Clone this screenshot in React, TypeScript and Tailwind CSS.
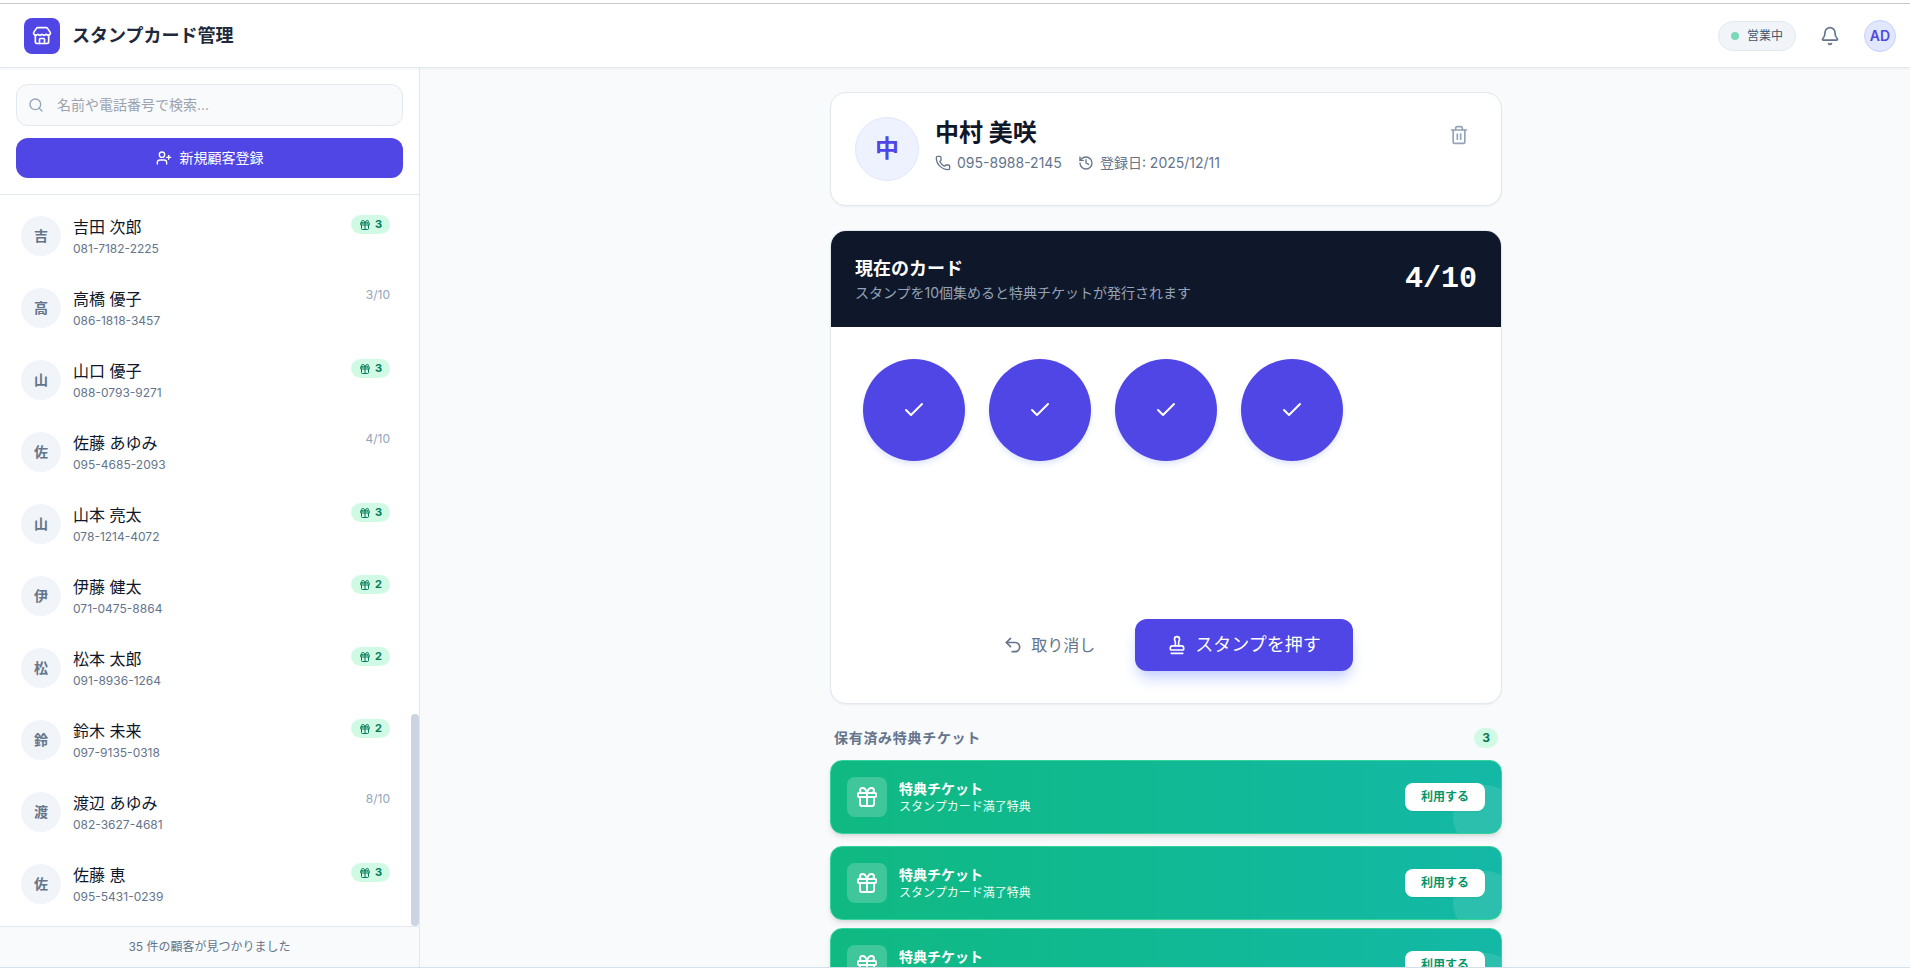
import {
  Bell,
  Check,
  Gift,
  History,
  Phone,
  Search,
  Stamp,
  Store,
  Trash2,
  Undo2,
  UserPlus,
} from "lucide-react";

type Customer = {
  name: string;
  phone: string;
  tickets?: number;
  stamps?: number;
};

const customers: Customer[] = [
  { name: "吉田 次郎", phone: "081-7182-2225", tickets: 3 },
  { name: "高橋 優子", phone: "086-1818-3457", stamps: 3 },
  { name: "山口 優子", phone: "088-0793-9271", tickets: 3 },
  { name: "佐藤 あゆみ", phone: "095-4685-2093", stamps: 4 },
  { name: "山本 亮太", phone: "078-1214-4072", tickets: 3 },
  { name: "伊藤 健太", phone: "071-0475-8864", tickets: 2 },
  { name: "松本 太郎", phone: "091-8936-1264", tickets: 2 },
  { name: "鈴木 未来", phone: "097-9135-0318", tickets: 2 },
  { name: "渡辺 あゆみ", phone: "082-3627-4681", stamps: 8 },
  { name: "佐藤 恵", phone: "095-5431-0239", tickets: 3 },
];

const CARD_SIZE = 10;
const stampCount = 4;

function Header() {
  return (
    <header className="z-10 flex h-16 shrink-0 items-center justify-between border-b border-[#e2e8f0] bg-white pr-[14px] pl-6 shadow-xs">
      <div className="flex items-center gap-3">
        <div className="flex size-9 items-center justify-center rounded-lg bg-[#4f46e5] text-white">
          <Store size={20} />
        </div>
        <h1 className="text-lg font-bold text-[#1e293b]">スタンプカード管理</h1>
      </div>
      <div className="flex items-center gap-4">
        <div className="flex items-center gap-2 rounded-full border border-[#e2e8f0] bg-[#f1f5f9] px-3 py-1.5 text-xs text-[#475569]">
          <span className="size-2 rounded-full bg-[#7dd8b8]" />
          営業中
        </div>
        <button type="button" aria-label="通知" className="p-2 text-[#64748b]">
          <Bell size={20} />
        </button>
        <div className="flex size-8 items-center justify-center rounded-full border border-[#c7d2fe] bg-[#e0e7ff] text-sm font-semibold text-[#4f46e5]">
          AD
        </div>
      </div>
    </header>
  );
}

function CustomerRow({ customer }: { customer: Customer }) {
  return (
    <li>
      <button
        type="button"
        className="flex w-full items-start gap-3 rounded-xl border border-transparent p-3 text-left"
      >
        <span className="flex size-10 shrink-0 items-center justify-center self-center rounded-full bg-[#f1f5f9] text-sm font-bold text-[#64748b]">
          {customer.name.charAt(0)}
        </span>
        <span className="flex min-w-0 flex-1 flex-col gap-0.5">
          <span className="truncate text-base text-[#0f172a]">{customer.name}</span>
          <span className="text-xs text-[#64748b]">{customer.phone}</span>
        </span>
        {customer.tickets ? (
          <span className="flex items-center gap-1 rounded-full bg-[#d1fae5] px-2 py-0.5 text-[11px] leading-[15px] font-bold text-[#047857]">
            <Gift size={12} />
            {customer.tickets}
          </span>
        ) : (
          <span className="text-xs text-[#94a3b8]">
            {customer.stamps}/{CARD_SIZE}
          </span>
        )}
      </button>
    </li>
  );
}

function Sidebar() {
  return (
    <aside className="flex w-[420px] shrink-0 flex-col border-r border-[#e2e8f0] bg-white">
      <div className="flex flex-col gap-3 border-b border-[#e2e8f0] p-4">
        <div className="relative">
          <Search size={16} className="absolute top-1/2 left-3 -translate-y-1/2 text-[#94a3b8]" />
          <input
            type="text"
            aria-label="顧客検索"
            placeholder="名前や電話番号で検索..."
            className="block w-full rounded-xl border border-[#e2e8f0] bg-[#f8fafc] py-2.5 pr-4 pl-10 text-sm placeholder:text-[#9ca3af]"
          />
        </div>
        <button
          type="button"
          className="flex w-full items-center justify-center gap-2 rounded-xl bg-[#4f46e5] py-2.5 text-sm text-white"
        >
          <UserPlus size={16} />
          新規顧客登録
        </button>
      </div>
      <div className="relative flex min-h-0 flex-1 flex-col justify-end overflow-hidden pr-2">
        <ul className="flex flex-col gap-1 px-2 pb-2">
          {customers.map((c) => (
            <CustomerRow key={c.phone} customer={c} />
          ))}
        </ul>
        <div className="absolute right-0 bottom-0 h-[29%] w-2 rounded-full bg-[#cbd5e1]" />
      </div>
      <p className="border-t border-[#e2e8f0] bg-[#f8fafc] p-3 text-center text-xs text-[#64748b]">
        35 件の顧客が見つかりました
      </p>
    </aside>
  );
}

function ProfileCard() {
  return (
    <section className="flex items-start gap-4 rounded-2xl border border-[#e2e8f0] bg-white p-6 shadow-xs">
      <div className="flex size-16 shrink-0 items-center justify-center rounded-full border border-[#e0e7ff] bg-[#eef2ff] text-2xl font-bold text-[#4f46e5]">
        中
      </div>
      <div className="flex flex-1 flex-col gap-1">
        <h2 className="text-2xl font-bold text-[#0f172a]">中村 美咲</h2>
        <div className="flex items-center gap-4 text-sm text-[#64748b]">
          <span className="flex items-center gap-1.5">
            <Phone size={16} />
            095-8988-2145
          </span>
          <span className="flex items-center gap-1.5">
            <History size={16} />
            登録日: 2025/12/11
          </span>
        </div>
      </div>
      <button type="button" aria-label="顧客を削除" className="p-2 text-[#94a3b8]">
        <Trash2 size={20} />
      </button>
    </section>
  );
}

function StampCard() {
  return (
    <section className="overflow-hidden rounded-2xl border border-[#e2e8f0] bg-white shadow-xs">
      <div className="flex items-center justify-between bg-[#0f172a] p-6">
        <div>
          <h3 className="text-lg font-bold text-white">現在のカード</h3>
          <p className="text-sm text-[#94a3b8]">
            スタンプを10個集めると特典チケットが発行されます
          </p>
        </div>
        <div className="font-['Liberation_Mono',monospace] text-3xl font-bold text-white">
          {stampCount}/{CARD_SIZE}
        </div>
      </div>
      <div className="flex flex-col gap-8 p-8">
        <div className="grid grid-cols-5 gap-6">
          {Array.from({ length: CARD_SIZE }, (_, i) =>
            i < stampCount ? (
              <div
                key={i}
                className="flex aspect-square items-center justify-center rounded-full bg-[#4f46e5] text-white shadow-md shadow-[#e0e7ff]"
              >
                <Check size={24} />
              </div>
            ) : (
              <div key={i} className="aspect-square rounded-full" />
            ),
          )}
        </div>
        <div className="flex items-center justify-center gap-4">
          <button
            type="button"
            className="flex items-center gap-2 rounded-xl px-6 py-3 text-base text-[#64748b]"
          >
            <Undo2 size={20} />
            取り消し
          </button>
          <button
            type="button"
            className="flex items-center gap-2 rounded-xl bg-[#4f46e5] px-8 py-3 text-lg text-white shadow-lg shadow-[#c7d2fe]"
          >
            <Stamp size={20} />
            スタンプを押す
          </button>
        </div>
      </div>
    </section>
  );
}

function Ticket() {
  return (
    <li className="relative flex items-center gap-3 overflow-hidden rounded-xl border border-[#34d399] bg-linear-to-r from-[#10b981] to-[#14b8a6] p-4 text-white shadow-md">
      <span className="absolute -right-4 -bottom-4 size-16 rounded-full bg-white/10" />
      <span className="flex size-10 items-center justify-center rounded-lg bg-white/20">
        <Gift size={24} />
      </span>
      <span className="flex flex-1 flex-col">
        <span className="text-sm font-bold">特典チケット</span>
        <span className="text-xs text-[#ecfdf5]">スタンプカード満了特典</span>
      </span>
      <button
        type="button"
        className="relative rounded-lg bg-white px-4 py-1.5 text-xs font-bold text-[#059669] shadow-xs"
      >
        利用する
      </button>
    </li>
  );
}

function Tickets() {
  return (
    <section className="flex flex-col gap-3">
      <div className="flex items-center justify-between px-1">
        <h3 className="text-sm font-bold tracking-wider text-[#64748b]">保有済み特典チケット</h3>
        <span className="rounded-full bg-[#d1fae5] px-2 py-0.5 text-xs font-bold text-[#047857]">
          3
        </span>
      </div>
      <div className="flex flex-col gap-2">
        <ul className="flex flex-col gap-3">
          <Ticket />
          <Ticket />
        </ul>
        <ul>
          <Ticket />
        </ul>
      </div>
    </section>
  );
}

export default function App() {
  return (
    <div className="flex h-screen flex-col border-b border-[#d5dfe9] bg-[#f8fafc] font-['Inter','Noto_Sans_CJK_JP',sans-serif]">
      <div className="h-1 shrink-0 border-b border-[#c8c8c8] bg-white" />
      <Header />
      <div className="flex min-h-0 flex-1">
        <Sidebar />
        <main className="min-w-0 flex-1 overflow-hidden pt-6 pr-[30px] pl-8">
          <div className="mx-auto flex max-w-2xl flex-col gap-6">
            <ProfileCard />
            <StampCard />
            <Tickets />
          </div>
        </main>
      </div>
    </div>
  );
}
